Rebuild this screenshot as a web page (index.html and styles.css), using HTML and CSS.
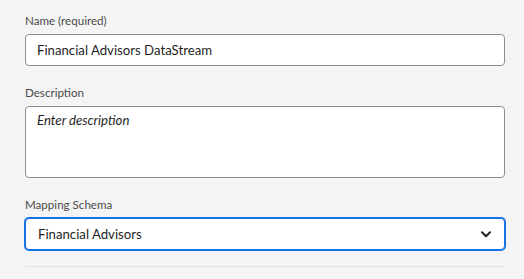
FILE: index.html
```html
<!doctype html>
<html lang="en">
<head>
  <meta charset="utf-8" />
  <meta name="viewport" content="width=device-width,initial-scale=1" />
  <title>Datastream details</title>
  <link rel="stylesheet" href="styles.css">
</head>
<body>
<div class="panel">
  <div class="field">
    <label for="name">Name (required)</label>
    <input id="name" class="textfield" type="text" value="Financial Advisors DataStream">
  </div>

  <div class="field">
    <label for="desc">Description</label>
    <textarea id="desc" class="textfield area" placeholder="Enter description"></textarea>
  </div>

  <div class="field">
    <label for="schema">Mapping Schema</label>
    <button id="schema" class="picker">
      <span>Financial Advisors</span>
      <svg width="10" height="7" viewBox="0 0 10 7" aria-hidden="true">
        <path d="M1 1.2 L5 5.2 L9 1.2" fill="none" stroke="#222" stroke-width="2" stroke-linecap="round" stroke-linejoin="round"/>
      </svg>
    </button>
  </div>

  <div class="divider"></div>
</div>
</body>
</html>
```

FILE: styles.css
```css
:root{
  --bg:#f4f4f4;
  --text:#1f1f1f;
  --label:#4b4b4b;
  --border:#8e8e8e;
  --focus:#1473e6;
  --line:#e1e1e1;
}

*{box-sizing:border-box}
body{
  margin:0;
  background:var(--bg);
  font-family:Lato,"Noto Sans",Arial,sans-serif;
  color:var(--text);
}

.panel{
  width:505px;
  padding:13px 0 0 25px;
}

.field{margin-bottom:19px}
.field label{
  display:block;
  font-size:11.6px;
  line-height:16px;
  color:var(--label);
  margin-bottom:5px;
}

.textfield{
  display:block;
  width:480px;
  height:32px;
  border:1px solid var(--border);
  border-radius:4px;
  background:#fff;
  padding:0 11px;
  font-family:inherit;
  font-size:13.2px;
  color:var(--text);
  outline:none;
}
.area{
  height:72px;
  padding:5px 11px;
  resize:none;
}
.area::placeholder{
  color:var(--text);
  font-style:italic;
}

.picker{
  display:flex;
  align-items:center;
  justify-content:space-between;
  width:480px;
  height:32px;
  border:1px solid var(--focus);
  box-shadow:0 0 0 1px var(--focus);
  border-radius:4px;
  background:#fff;
  padding:0 13px 0 12px;
  font-family:inherit;
  font-size:13.2px;
  color:var(--text);
  cursor:pointer;
}

.divider{
  width:480px;
  height:1px;
  background:var(--line);
  margin-top:-3px;
}
```
